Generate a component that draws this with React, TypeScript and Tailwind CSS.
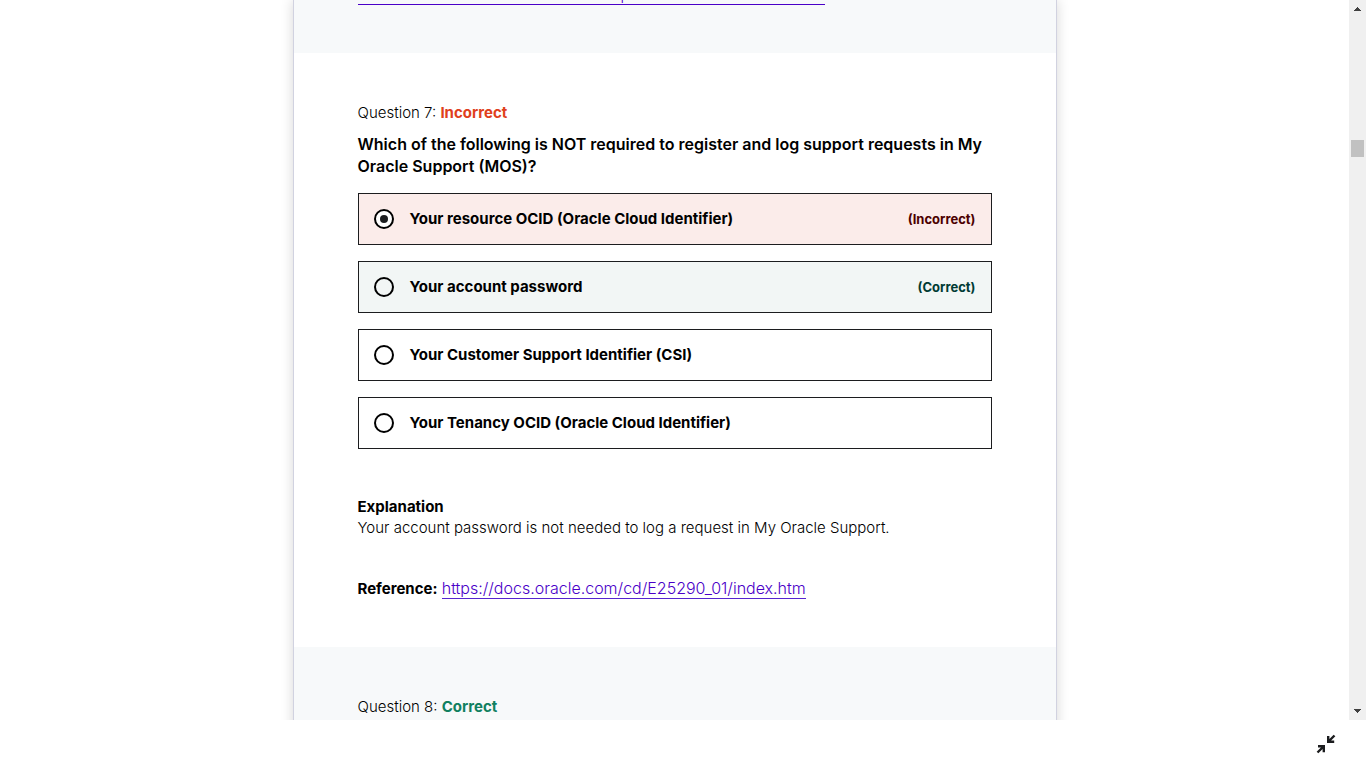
import { useState } from "react";

type Option = { label: string; verdict?: "Incorrect" | "Correct" };

const options: Option[] = [
  { label: "Your resource OCID (Oracle Cloud Identifier)", verdict: "Incorrect" },
  { label: "Your account password", verdict: "Correct" },
  { label: "Your Customer Support Identifier (CSI)" },
  { label: "Your Tenancy OCID (Oracle Cloud Identifier)" },
];

const rowColor = { Incorrect: "bg-[#fbecea]", Correct: "bg-[#f2f6f5]" };
const verdictColor = { Incorrect: "text-[#4b0000]", Correct: "text-[#003b34]" };

function AnswerRow({ option, checked, onSelect }: { option: Option; checked: boolean; onSelect: () => void }) {
  return (
    <label
      className={`flex items-center gap-4 border border-[#1c1d1f] p-[15px] ${option.verdict ? rowColor[option.verdict] : "bg-white"}`}
    >
      <input type="radio" name="question-7" checked={checked} onChange={onSelect} className="sr-only" />
      <svg viewBox="0 0 20 20" className="size-5 shrink-0" aria-hidden="true">
        <circle cx="10" cy="10" r="9" fill={checked ? "#fff" : "none"} stroke="#000" strokeWidth="2" />
        {checked && <circle cx="10" cy="10" r="4" fill="#1c1d1f" />}
      </svg>
      <span className="flex-1 leading-5 font-bold">{option.label}</span>
      {option.verdict && (
        <span className={`text-[13px] leading-5 font-bold ${verdictColor[option.verdict]}`}>({option.verdict})</span>
      )}
    </label>
  );
}

function ScrollRail() {
  return (
    <div className="flex w-[17px] shrink-0 flex-col items-center bg-[#f0f0f0]" aria-hidden="true">
      <svg viewBox="0 0 17 17" className="size-[17px] shrink-0" shapeRendering="crispEdges">
        <path d="M8 7h1v1h1v1h1v1h1v1H5v-1h1V9h1V8h1z" fill="#404040" />
      </svg>
      <div className="flex w-full flex-1 flex-col px-0.5">
        <div className="basis-[123px]" />
        <div className="h-[17px] bg-[#c1c1c1]" />
      </div>
      <svg viewBox="0 0 17 17" className="size-[17px] shrink-0" shapeRendering="crispEdges">
        <path d="M5 6h7v1h-1v1h-1v1H9v1H8V9H7V8H6V7H5z" fill="#404040" />
      </svg>
    </div>
  );
}

export default function App() {
  const [selected, setSelected] = useState(0);

  return (
    <div className="flex h-screen flex-col bg-white font-['Inter','Liberation_Sans',sans-serif] text-[15px] leading-[22px] font-light text-black">
      <div className="flex min-h-0 flex-1">
        <main className="min-w-0 flex-1 overflow-hidden">
          <div className="mx-auto min-h-full max-w-[764px] border-x border-[#d1d2e0] shadow-[0_0_12px_rgba(0,0,0,0.16)]">
            <section className="flex h-[53px] items-end overflow-hidden bg-[#f7f9fa] px-16 pb-12">
              <a href="#reference-6" className="block w-[467px] border-b border-[#4a00c8] pl-[263px] leading-[18px] text-[#4a00c8]">
                p
              </a>
            </section>

            <section className="bg-white px-16 py-12">
              <p className="leading-6">
                Question 7: <strong className="font-bold text-[#e0401c]">Incorrect</strong>
              </p>
              <h2 className="mt-2 text-base leading-[22px] font-semibold">
                Which of the following is NOT required to register and log support requests in My Oracle Support (MOS)?
              </h2>
              <div className="mt-4 flex flex-col gap-4" role="radiogroup" aria-label="Answers">
                {options.map((option, i) => (
                  <AnswerRow key={option.label} option={option} checked={selected === i} onSelect={() => setSelected(i)} />
                ))}
              </div>
              <div className="mt-[47px] leading-[21px]">
                <h3 className="font-bold">Explanation</h3>
                <p>Your account password is not needed to log a request in My Oracle Support.</p>
                <p className="mt-10">
                  <strong className="font-bold">Reference:</strong>{" "}
                  <a
                    href="https://docs.oracle.com/cd/E25290_01/index.htm"
                    className="border-b border-[#5624d0] text-base leading-[21px] text-[#4a00c8]"
                  >
                    https://docs.oracle.com/cd/E25290_01/index.htm
                  </a>
                </p>
              </div>
            </section>

            <section className="bg-[#f7f9fa] px-16 py-12">
              <p className="leading-6">
                Question 8: <strong className="font-bold text-[#108060]">Correct</strong>
              </p>
            </section>
          </div>
        </main>
        <ScrollRail />
      </div>
      <footer className="flex h-12 shrink-0 items-center justify-end px-7">
        <button type="button" aria-label="Exit full screen" className="flex size-6 items-center justify-center">
          <svg viewBox="0 0 24 24" className="size-6" fill="none" stroke="#1c1d1f" strokeWidth="2.4">
            <path d="M20.5 3.5L15 9M14.2 4v5.8h6M3.5 20.5L9 15M4 14.2h5.8v6" />
          </svg>
        </button>
      </footer>
    </div>
  );
}
